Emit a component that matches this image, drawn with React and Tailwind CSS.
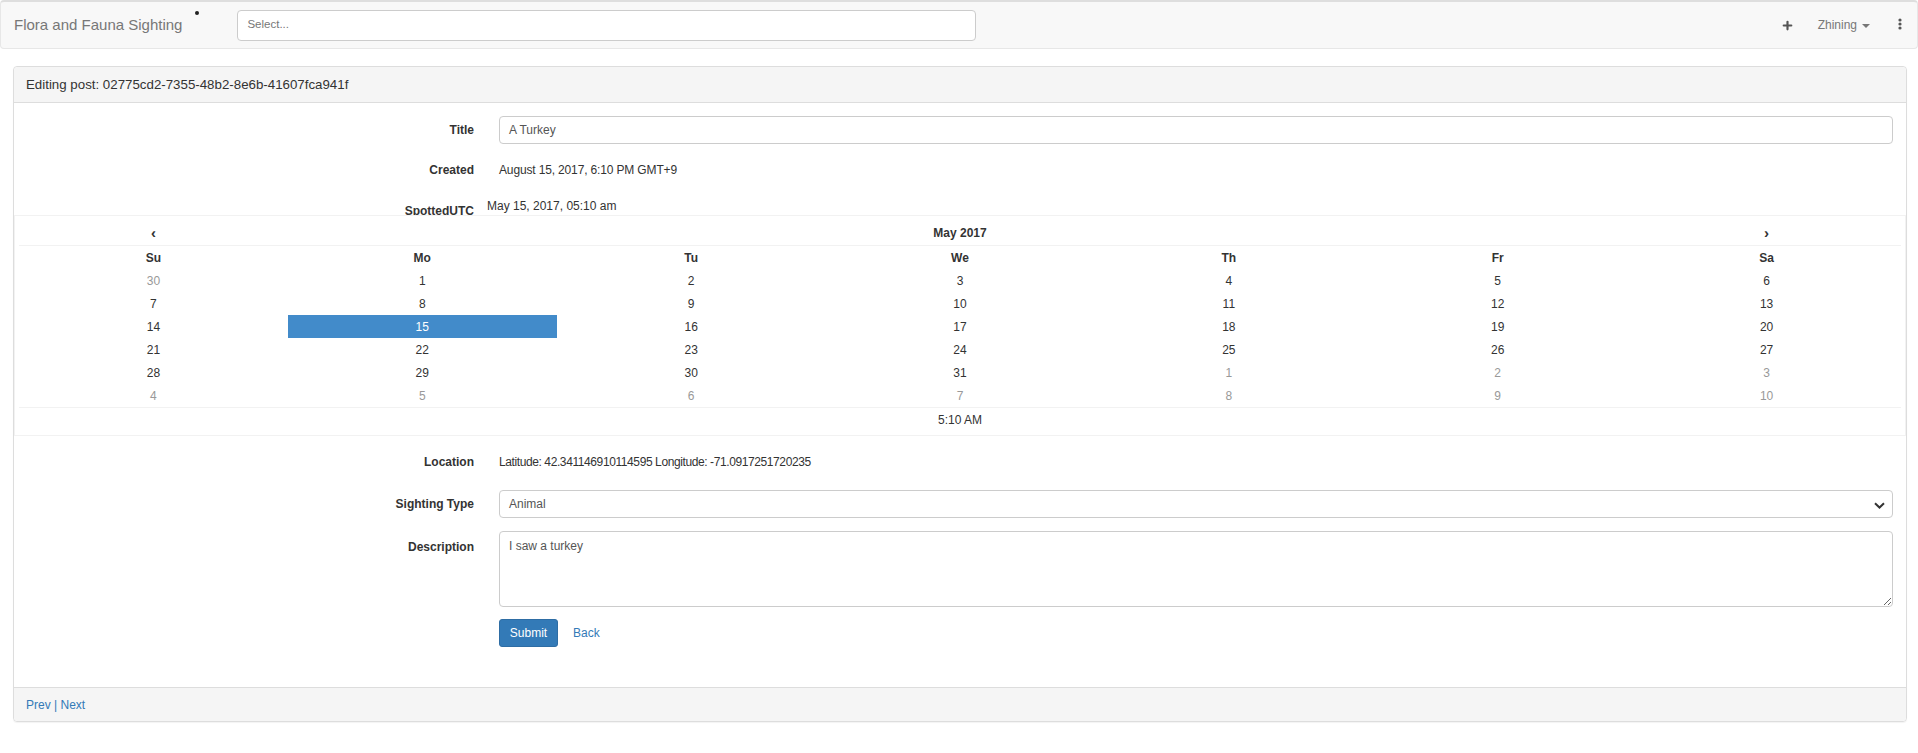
import React from 'react';
import { Plus } from 'lucide-react';

const weeks = [
  [[30, 'old'], [1], [2], [3], [4], [5], [6]],
  [[7], [8], [9], [10], [11], [12], [13]],
  [[14], [15, 'active'], [16], [17], [18], [19], [20]],
  [[21], [22], [23], [24], [25], [26], [27]],
  [[28], [29], [30], [31], [1, 'new'], [2, 'new'], [3, 'new']],
  [[4, 'new'], [5, 'new'], [6, 'new'], [7, 'new'], [8, 'new'], [9, 'new'], [10, 'new']],
];

const dayNames = ['Su', 'Mo', 'Tu', 'We', 'Th', 'Fr', 'Sa'];

const Navbar = () => (
  <div className="h-[49px] flex items-center bg-[#f8f8f8] border border-[#e7e7e7] border-t-2 border-t-[#dedede] rounded-[4px]">
    <span className="pl-[13px] text-[15px] text-[#777]">Flora and Fauna Sighting</span>
    <span className="ml-[13px] w-[4px] h-[4px] rounded-full bg-[#222] self-start mt-[9px]" />
    <div className="ml-[38px] w-[739px] h-[31px] bg-white border border-[#ccc] rounded-[4px] flex items-center pl-[9px] text-[11.5px] text-[#777]">
      Select...
    </div>
    <div className="ml-auto flex items-center pr-[15px]">
      <Plus size={13} strokeWidth={4} className="text-[#555]" />
      <span className="ml-[24px] text-[12px] text-[#777]">Zhining</span>
      <span className="ml-[5px] w-0 h-0 border-l-[4px] border-r-[4px] border-t-[4px] border-l-transparent border-r-transparent border-t-[#777] mt-[2px]" />
      <svg width="4" height="12" viewBox="0 0 4 12" className="ml-[28px] -mt-[2px]">
        <circle cx="2" cy="2" r="1.6" fill="#555" />
        <circle cx="2" cy="6" r="1.6" fill="#555" />
        <circle cx="2" cy="10" r="1.6" fill="#555" />
      </svg>
    </div>
  </div>
);

const Calendar = () => (
  <div className="relative bg-white border border-[#f2f2f2] p-[4px] text-[12px] text-[#333]">
    <div className="grid grid-cols-7 h-[26px] border-b border-[#f2f2f2] items-center text-center font-bold">
      <span className="text-[15px] leading-none">‹</span>
      <span className="col-span-5">May 2017</span>
      <span className="text-[15px] leading-none">›</span>
    </div>
    <div className="grid grid-cols-7 h-[23px] items-center text-center font-bold">
      {dayNames.map((d) => (
        <span key={d}>{d}</span>
      ))}
    </div>
    {weeks.map((w, i) => (
      <div key={i} className="grid grid-cols-7 h-[23px] text-center">
        {w.map(([n, kind], j) => (
          <span
            key={j}
            className={`flex items-center justify-center ${
              kind === 'active' ? 'bg-[#428bca] text-white' : kind ? 'text-[#999]' : ''
            }`}
          >
            {n}
          </span>
        ))}
      </div>
    ))}
    <div className="h-[24px] border-t border-[#f2f2f2] flex items-center justify-center">5:10 AM</div>
  </div>
);

const Label = ({ children, className = '' }) => (
  <div className={`w-[460px] shrink-0 text-right font-bold text-[12px] text-[#333] ${className}`}>{children}</div>
);

export default function App() {
  return (
    <div className="min-h-[753px] bg-white font-['Liberation_Sans',Arial,sans-serif] text-[#333]">
      <Navbar />

      <div className="mt-[17px] ml-[13px] mr-[11px] border border-[#ddd] rounded-[4px] shadow-[0_1px_1px_rgba(0,0,0,0.05)]">
        <div className="h-[36px] bg-[#f5f5f5] border-b border-[#ddd] rounded-t-[4px] flex items-center pl-[12px] text-[13.3px] text-[#333]">
          Editing post: 02775cd2-7355-48b2-8e6b-41607fca941f
        </div>

        <div className="pt-[13px] pb-[40px]">
          <div className="flex items-center h-[28px] pr-[13px]">
            <Label>Title</Label>
            <div className="ml-[25px] flex-1 h-[28px] border border-[#ccc] rounded-[4px] flex items-center pl-[9px] text-[12px] text-[#555]">
              A Turkey
            </div>
          </div>

          <div className="flex items-center h-[28px] mt-[12px]">
            <Label>Created</Label>
            <span className="ml-[25px] text-[12px] tracking-[-0.15px]">August 15, 2017, 6:10 PM GMT+9</span>
          </div>

          <div className="flex items-start h-[20px] mt-[11px] overflow-hidden">
            <Label className="pt-[9px] leading-[14px]">SpottedUTC</Label>
            <span className="ml-[13px] pt-[4px] leading-[14px] text-[12px]">May 15, 2017, 05:10 am</span>
          </div>

          <Calendar />

          <div className="flex items-center h-[28px] mt-[12px]">
            <Label>Location</Label>
            <span className="ml-[25px] text-[12px] tracking-[-0.4px]">
              Latitude: 42.341146910114595 Longitude: -71.0917251720235
            </span>
          </div>

          <div className="flex items-center h-[28px] mt-[14px] pr-[13px]">
            <Label>Sighting Type</Label>
            <div className="relative ml-[25px] flex-1 h-[28px] border border-[#ccc] rounded-[4px] flex items-center pl-[9px] text-[12px] text-[#555]">
              Animal
              <svg width="11" height="7" viewBox="0 0 11 7" className="absolute right-[7px] top-[11px]">
                <path d="M1 1.2 L5.5 5.5 L10 1.2" fill="none" stroke="#333" strokeWidth="2" />
              </svg>
            </div>
          </div>

          <div className="flex items-start mt-[13px] pr-[13px]">
            <Label className="pt-[7px]">Description</Label>
            <textarea
              defaultValue="I saw a turkey"
              className="ml-[25px] flex-1 h-[76px] border border-[#ccc] rounded-[4px] px-[9px] pt-[5px] text-[12px] text-[#555] outline-none"
            />
          </div>

          <div className="flex items-center mt-[12px] pl-[485px]">
            <button className="w-[59px] h-[28px] bg-[#337ab7] border border-[#2e6da4] rounded-[3px] text-white text-[12px]">
              Submit
            </button>
            <span className="ml-[15px] text-[12px] text-[#337ab7]">Back</span>
          </div>
        </div>

        <div className="h-[34px] bg-[#f5f5f5] border-t border-[#ddd] rounded-b-[4px] flex items-center pl-[12px] text-[12px] text-[#337ab7]">
          Prev | Next
        </div>
      </div>
    </div>
  );
}
